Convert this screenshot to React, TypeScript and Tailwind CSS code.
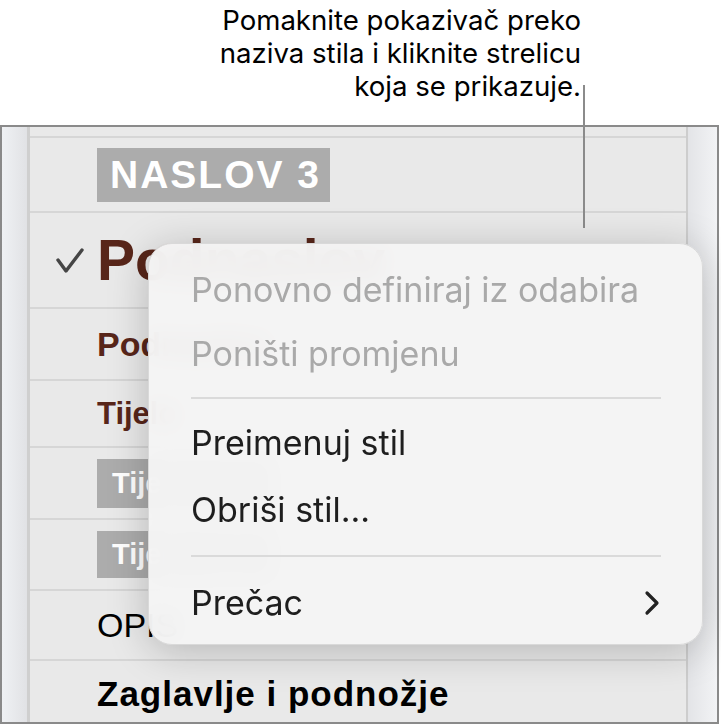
const brown = "text-[#58261a]";

function Check() {
  return (
    <svg width="30" height="30" viewBox="0 0 30 30" className="shrink-0">
      <path d="M3 13 L11 24 L27 3" fill="none" stroke="#454545" strokeWidth="3.4" strokeLinecap="round" strokeLinejoin="round" />
    </svg>
  );
}

function Chevron() {
  return (
    <svg width="18" height="26" viewBox="0 0 18 26">
      <path d="M4 3 L14 13 L4 23" fill="none" stroke="#222" strokeWidth="3.2" strokeLinecap="round" strokeLinejoin="round" />
    </svg>
  );
}

function Row({ h, children, last }: { h: string; children?: React.ReactNode; last?: boolean }) {
  return (
    <div className={`${h} flex items-center pl-[67px] overflow-hidden whitespace-nowrap ${last ? "" : "border-b-2 border-[#d6d6d6]"}`}>
      {children}
    </div>
  );
}

function Popup() {
  return (
    <div className="absolute left-[148px] top-[243px] w-[555px] h-[402px] rounded-[24px] bg-[#f4f4f4]/95 backdrop-blur-md border border-[#d9d9d9] shadow-[0_6px_40px_rgba(0,0,0,0.22)] pl-[42px] pr-[41px] pt-[14px] text-[34px] leading-none font-['Inter',sans-serif]">
      <div className="h-[64px] flex items-center text-[#a9a9a9]">Ponovno definiraj iz odabira</div>
      <div className="h-[64px] flex items-center text-[#a9a9a9]">Poništi promjenu</div>
      <div className="my-[11px] border-t-2 border-[#dadada]" />
      <div className="h-[66px] flex items-center text-[#1e1e1e]">Preimenuj stil</div>
      <div className="h-[68px] flex items-center text-[#1e1e1e]">Obriši stil...</div>
      <div className="my-[11px] border-t-2 border-[#dadada]" />
      <div className="h-[70px] flex items-center justify-between text-[#1e1e1e]">
        <span>Prečac</span>
        <Chevron />
      </div>
    </div>
  );
}

export default function App() {
  return (
    <div className="relative w-[721px] h-[726px] bg-white overflow-hidden font-['Inter',sans-serif]">
      <div className="h-[125px] flex justify-end pr-[140px] pt-[4px]">
        <p className="text-right text-[27.6px] leading-[33px] text-black">
          Pomaknite pokazivač preko
          <br />
          naziva stila i kliknite strelicu
          <br />
          koja se prikazuje.
        </p>
      </div>

      <div className="w-[719px] h-[599px] border-2 border-[#8a8a8a] flex">
        <div className="w-[28px] bg-gradient-to-r from-[#eff1f4] to-[#e1e2e5] border-r-[3px] border-[#cfcfcf]" />
        <div className="flex-1 bg-[#e9e9e9] flex flex-col">
          <Row h="h-[11px]" />
          <Row h="h-[75px]">
            <span className="bg-[#acacac] text-white font-['Liberation_Sans',sans-serif] font-bold text-[39px] leading-[54px] h-[54px] pl-[13px] pr-[9px] tracking-[2px]">
              NASLOV 3
            </span>
          </Row>
          <Row h="h-[96px]">
            <div className="-ml-[42px] mr-[12px] mt-[4px]"><Check /></div>
            <span className={`${brown} font-['Liberation_Sans',sans-serif] font-bold text-[57px] leading-none`}>Podnaslov</span>
          </Row>
          <Row h="h-[72px]">
            <span className={`${brown} font-['Liberation_Sans',sans-serif] font-bold text-[34px] leading-none`}>Podnaslov</span>
          </Row>
          <Row h="h-[67px]">
            <span className={`${brown} font-['Liberation_Sans',sans-serif] font-bold text-[31px] leading-none`}>Tijelo</span>
          </Row>
          <Row h="h-[72px]">
            <span className="bg-[#acacac] text-white font-['Liberation_Sans',sans-serif] font-bold text-[29px] leading-[49px] h-[49px] pl-[15px] pr-[10px]">
              Tijelo malo
            </span>
          </Row>
          <Row h="h-[71px]">
            <span className="bg-[#acacac] text-white font-['Liberation_Sans',sans-serif] font-bold text-[29px] leading-[47px] h-[47px] pl-[15px] pr-[10px]">
              Tijelo malo
            </span>
          </Row>
          <Row h="h-[70px]">
            <span className="text-black font-['Liberation_Sans',sans-serif] text-[34px] leading-none">OPIS</span>
          </Row>
          <Row h="flex-1" last>
            <span className="text-black font-['Liberation_Sans',sans-serif] font-bold text-[35px] tracking-[1px] leading-none mt-[3px]">Zaglavlje i podnožje</span>
          </Row>
        </div>
        <div className="w-[31px] bg-gradient-to-r from-[#e3e4e7] to-[#f2f3f5] border-l-2 border-[#cdcdcd]" />
      </div>

      <div className="absolute left-[583px] top-[85px] w-[2px] h-[143px] bg-[#8b8b8b]" />
      <Popup />
    </div>
  );
}
